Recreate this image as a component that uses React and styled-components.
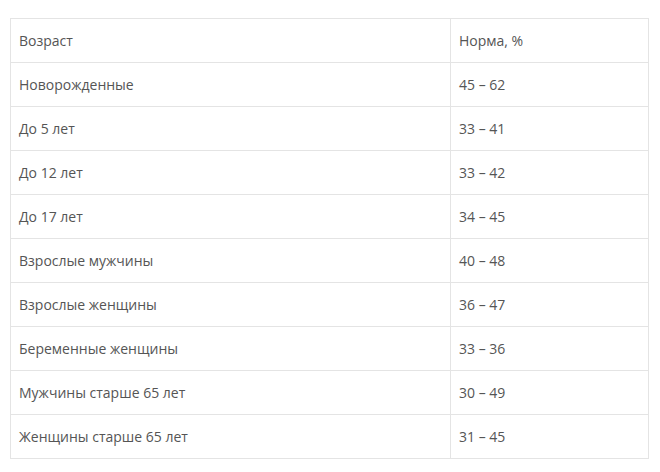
import React from 'react'
import styled, { createGlobalStyle } from 'styled-components'

const Global = createGlobalStyle`
  body {
    margin: 0;
    background: #fff;
    font-family: "Open Sans", "Noto Sans", sans-serif;
  }
`

const Wrap = styled.div`
  padding: 18px 12px 0 10px;
`

const Table = styled.table`
  width: 639px;
  border-collapse: collapse;
  font-size: 14px;
  color: #555;
`

const Cell = styled.td`
  height: 43px;
  padding: 0 8px;
  border: 1px solid #e4e4e4;
  vertical-align: middle;
  width: ${p => (p.$narrow ? '181px' : 'auto')};
`

const rows = [
  ['Возраст', 'Норма, %'],
  ['Новорожденные', '45 – 62'],
  ['До 5 лет', '33 – 41'],
  ['До 12 лет', '33 – 42'],
  ['До 17 лет', '34 – 45'],
  ['Взрослые мужчины', '40 – 48'],
  ['Взрослые женщины', '36 – 47'],
  ['Беременные женщины', '33 – 36'],
  ['Мужчины старше 65 лет', '30 – 49'],
  ['Женщины старше 65 лет', '31 – 45'],
]

const App = () => {
  return (
    <Wrap>
      <Global />
      <Table>
        <tbody>
          {rows.map(([age, norm]) => (
            <tr key={age}>
              <Cell>{age}</Cell>
              <Cell $narrow>{norm}</Cell>
            </tr>
          ))}
        </tbody>
      </Table>
    </Wrap>
  )
}

export default App
